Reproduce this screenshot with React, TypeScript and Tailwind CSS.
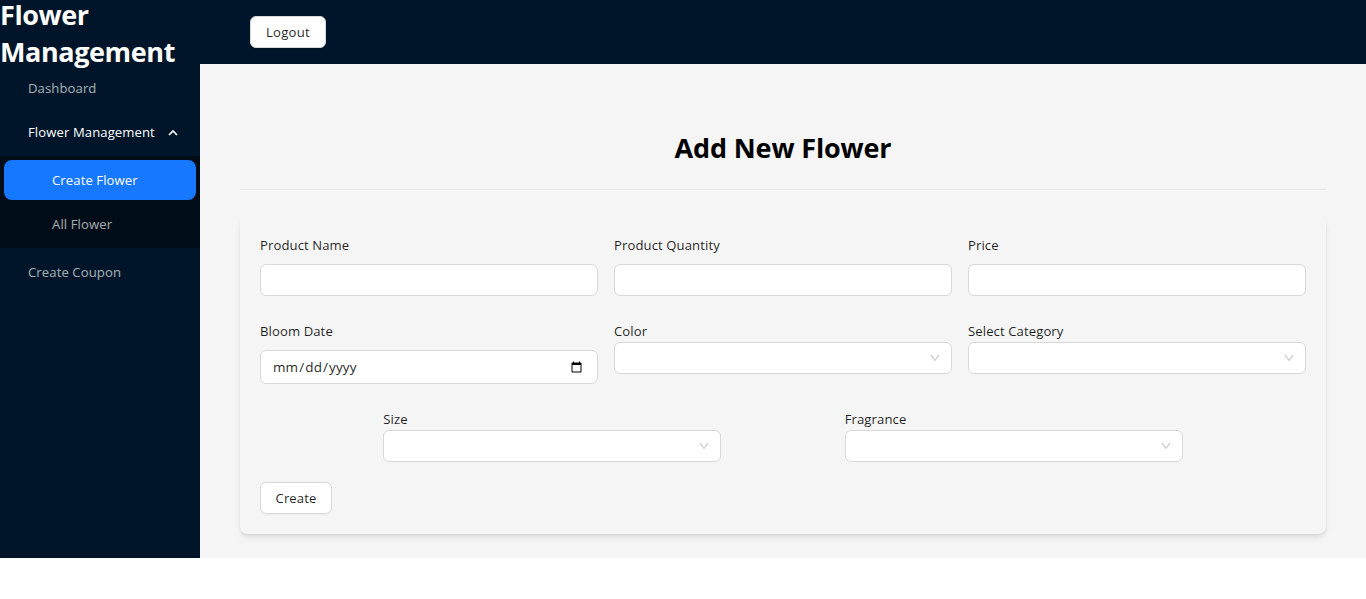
import type { ReactNode } from "react";
import { AiOutlineDown } from "react-icons/ai";

function Field({ label, children }: { label: string; children: ReactNode }) {
  return (
    <div className="w-[338px]">
      <label className="block h-[22px] leading-[22px]">{label}</label>
      {children}
    </div>
  );
}

function TextInput() {
  return <input className="mt-2 block h-8 w-full rounded-md border border-[#d9d9d9] bg-white px-3 outline-none" />;
}

function Select() {
  return (
    <div className="flex h-8 w-full items-center justify-end rounded-md border border-[#d9d9d9] bg-white pr-[10px] text-black/25">
      <AiOutlineDown size={12} />
    </div>
  );
}

function MenuItem({ label, className, children }: { label: string; className: string; children?: ReactNode }) {
  return (
    <div className={`flex h-10 items-center ${className}`}>
      <span className="pt-0.5">{label}</span>
      {children}
    </div>
  );
}

export default function App() {
  return (
    <div className="min-h-[599px] bg-white font-['Open_Sans',sans-serif] text-[13.1px] tracking-[0.1px] text-black/88">
      <div className="flex h-[558px]">
        <aside className="w-[200px] shrink-0 bg-[#001529] text-white/65">
          <h1 className="-mt-1 h-[68px] text-[27px] leading-[37px] font-bold tracking-[-0.4px] text-white">
            Flower
            <br />
            Management
          </h1>
          <nav className="pt-1">
            <MenuItem label="Dashboard" className="pl-7" />
            <MenuItem label="Flower Management" className="mt-1 justify-between pr-[22px] pl-7 text-white">
              <svg width="10" height="8" viewBox="0 0 10 8" fill="none" stroke="currentColor" strokeWidth="1.7" className="mt-px">
                <path d="M1 6 L5 2 L9 6" />
              </svg>
            </MenuItem>
            <div className="mt-1 bg-[#000c17] px-1 py-1">
              <MenuItem label="Create Flower" className="rounded-lg bg-[#1677ff] pl-12 text-white" />
              <MenuItem label="All Flower" className="mt-1 pl-12" />
            </div>
            <MenuItem label="Create Coupon" className="mt-1 pl-7" />
          </nav>
        </aside>
        <div className="flex-1 bg-[#f5f5f5]">
          <header className="flex h-16 items-center bg-[#001529] pl-[50px]">
            <button className="h-8 w-[76px] rounded-md border border-[#d9d9d9] bg-white pt-0.5 tracking-[0.3px] shadow-[0_2px_0_rgba(0,0,0,0.02)]">Logout</button>
          </header>
          <main className="px-10 pt-[65px]">
            <h2 className="text-center text-[27px] leading-[37px] font-bold tracking-[-0.15px] text-black">Add New Flower</h2>
            <hr className="mt-[23px] border-[#e8e8e8]" />
            <form className="mt-6 h-[320px] rounded-lg p-5 shadow-md">
              <div className="grid grid-cols-3 gap-x-4 gap-y-6">
                <Field label="Product Name"><TextInput /></Field>
                <Field label="Product Quantity"><TextInput /></Field>
                <Field label="Price"><TextInput /></Field>
                <Field label="Bloom Date">
                  <input type="date" className="mt-2 block h-[34px] w-full rounded-md border border-[#d9d9d9] bg-white pt-px pr-3 pl-[11px] text-[13.5px]" />
                </Field>
                <Field label="Color"><Select /></Field>
                <Field label="Select Category"><Select /></Field>
              </div>
              <div className="mt-6 flex justify-evenly">
                <Field label="Size"><Select /></Field>
                <Field label="Fragrance"><Select /></Field>
              </div>
              <button className="mt-5 h-8 w-[72px] rounded-md border border-[#d9d9d9] bg-white pt-px shadow-[0_2px_0_rgba(0,0,0,0.02)]">Create</button>
            </form>
          </main>
        </div>
      </div>
    </div>
  );
}
